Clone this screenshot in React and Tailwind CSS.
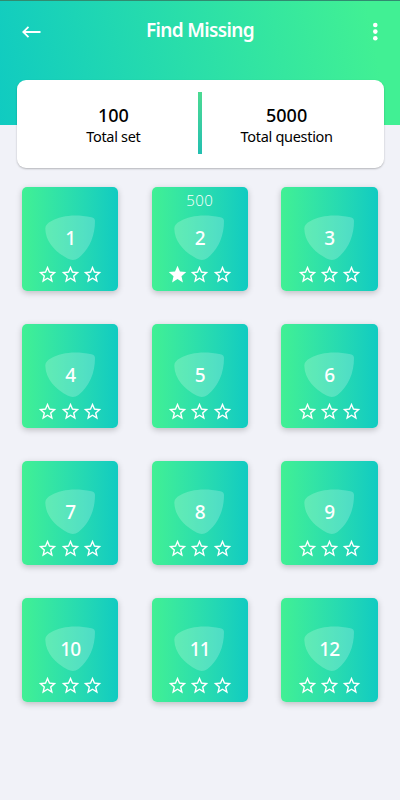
const levels = [
  { id: 1, stars: 0 },
  { id: 2, stars: 1, score: 500 },
  { id: 3, stars: 0 },
  { id: 4, stars: 0 },
  { id: 5, stars: 0 },
  { id: 6, stars: 0 },
  { id: 7, stars: 0 },
  { id: 8, stars: 0 },
  { id: 9, stars: 0 },
  { id: 10, stars: 0 },
  { id: 11, stars: 0 },
  { id: 12, stars: 0 },
];

function Star({ filled }) {
  return (
    <svg viewBox="0 0 24 24" className="size-[21px]" fill="currentColor">
      {filled ? (
        <path d="M12 17.27 18.18 21l-1.64-7.03L22 9.24l-7.19-.61L12 2 9.19 8.63 2 9.24l5.46 4.73L5.82 21z" />
      ) : (
        <path d="m22 9.24-7.19-.62L12 2 9.19 8.63 2 9.24l5.46 4.73L5.82 21 12 17.27 18.18 21l-1.63-7.03L22 9.24zM12 15.4l-3.76 2.27 1-4.28-3.32-2.88 4.38-.38L12 6.1l1.71 4.04 4.38.38-3.32 2.88 1 4.28L12 15.4z" />
      )}
    </svg>
  );
}

function LevelCard({ level }) {
  return (
    <div className="flex h-[104px] flex-col items-center rounded-[5px] bg-linear-to-r from-[#41f094] to-[#10cbc1] text-white shadow-[0_2px_6px_rgba(0,0,0,0.22)]">
      <div className="h-[28px] pt-[3px] font-['Open_Sans',sans-serif] text-[15px] leading-[20px] font-light tracking-[0.4px]">
        {level.score}
      </div>
      <div className="grid h-[46px] w-[51px] place-items-center">
        <svg viewBox="0 0 51 46" className="col-start-1 row-start-1 h-[46px] w-[51px]">
          <path
            d="M0.3 13.5C0.3 10.5 2.5 8 6.5 6C15.5 1 29 -1.2 46.5 2.2Q50 3 50 6C50 21 44.5 34 33.5 43Q28.5 46.5 22.5 43.5C10.5 37 0.5 27 0.3 13.5Z"
            fill="white"
            fillOpacity="0.21"
          />
        </svg>
        <span className="col-start-1 row-start-1 font-['Noto_Sans',sans-serif] text-[19px] leading-[24px] font-medium tracking-[-0.9px]">
          {level.id}
        </span>
      </div>
      <div className="mt-[3px] flex gap-[1.3px]">
        {[0, 1, 2].map((i) => (
          <Star key={i} filled={i < level.stars} />
        ))}
      </div>
    </div>
  );
}

function Stat({ value, label }) {
  return (
    <div className="flex flex-1 flex-col items-center pt-[24px] text-black">
      <span className="text-[18px] leading-[22px] font-medium">{value}</span>
      <span className="text-[14.5px] leading-[21px] tracking-[-0.3px]">{label}</span>
    </div>
  );
}

export default function App() {
  return (
    <div className="h-[800px] w-[400px] overflow-hidden bg-[#f1f2f8] font-['Noto_Sans',sans-serif]">
      <header className="h-[125px] border-t border-[#318b70] bg-linear-[79deg,#10cbc1,#41f094_92%] text-white">
        <div className="grid h-[60px] grid-cols-[1fr_auto_1fr] items-center pr-[22px] pl-[22px]">
          <svg viewBox="0 0 19 12" className="mt-[2px] h-[12px] w-[19px]" fill="none" stroke="currentColor" strokeWidth="1.8">
            <path d="M6.5 0.8 1.2 6l5.3 5.2M1.2 6H18.5" />
          </svg>
          <h1 className="-mt-[2px] text-[19px] leading-[24px] font-semibold tracking-[-0.65px]">Find Missing</h1>
          <svg viewBox="0 0 6 20" className="mt-[2px] h-[20px] w-[6px] justify-self-end" fill="currentColor">
            <circle cx="3.3" cy="3" r="2.3" />
            <circle cx="3.3" cy="9.6" r="2.3" />
            <circle cx="3.3" cy="16.2" r="2.3" />
          </svg>
        </div>
      </header>

      <section className="relative mx-[16.5px] -mt-[45.5px] flex h-[88px] rounded-[9px] bg-white px-[12px] shadow-[0_1px_2px_rgba(0,0,0,0.25)]">
        <Stat value="100" label="Total set" />
        <div className="mt-[12.5px] h-[62px] w-[3.5px] bg-linear-to-b from-[#4bda91] to-[#22bfb0]" />
        <Stat value="5000" label="Total question" />
      </section>

      <main className="mt-[19px] grid grid-cols-3 gap-[33.2px] pr-[22.5px] pl-[22px]">
        {levels.map((level) => (
          <LevelCard key={level.id} level={level} />
        ))}
      </main>
    </div>
  );
}
